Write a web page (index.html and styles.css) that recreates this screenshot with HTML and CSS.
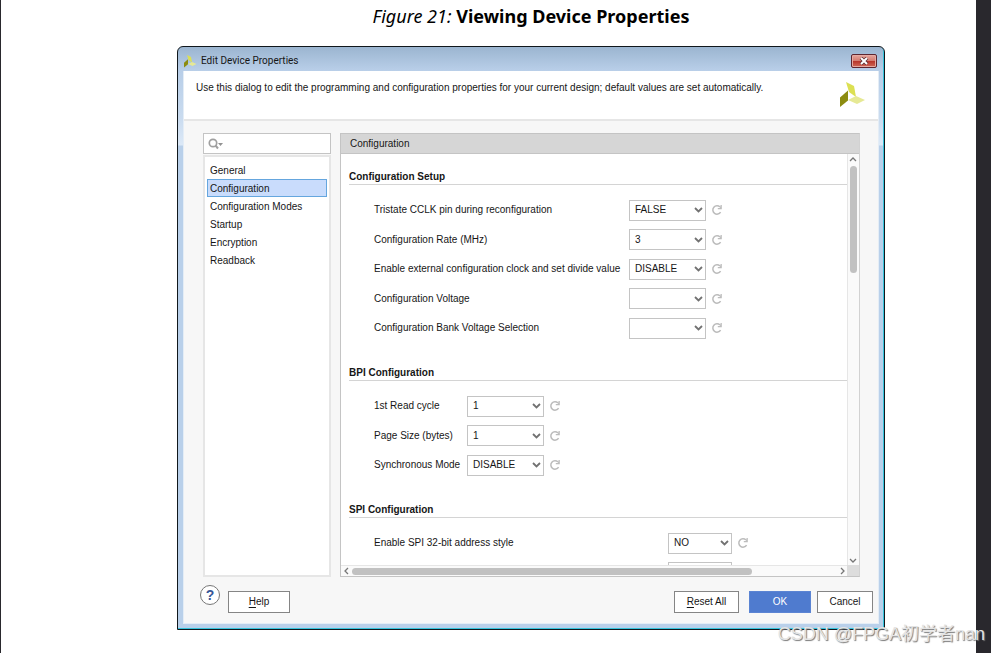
FILE: index.html
```html
<!DOCTYPE html>
<html lang="en">
<head>
<meta charset="utf-8">
<title>Viewing Device Properties</title>
<link rel="stylesheet" href="styles.css">
</head>
<body>
<svg class="defs" aria-hidden="true">
  <symbol id="reset" viewBox="0 0 12 12"><path d="M9.6 8.2A4.2 4.2 0 1 1 9 3" fill="none" stroke="#bcbcbc" stroke-width="1.5"/><path d="M10.8 1V5.2H6.8V4H9L9.6 1z" fill="#bcbcbc"/></symbol>
  <symbol id="logo" viewBox="0 0 26 26"><path d="M6 0l8 4 2 11-7-5z" fill="#dce053"/><path d="M0 15.5l8-7v10L0 25z" fill="#8c8c10"/><path d="M8 18l8-4 9 4-8 4z" fill="#e6e995"/></symbol>
</svg>
<main class="page">
  <h1 class="caption"><em>Figure 21:</em> Viewing Device Properties</h1>
  <section class="dialog">
    <header class="titlebar">
      <svg class="titlebar-logo"><use href="#logo"/></svg>
      <h2 class="title">Edit Device Properties</h2>
      <button class="close" aria-label="Close"><svg viewBox="0 0 10 8"><path d="M2 1l6 6M8 1L2 7" stroke="#5c3034" stroke-width="3.6"/><path d="M2 1l6 6M8 1L2 7" stroke="#fff" stroke-width="2"/></svg></button>
    </header>
    <div class="content">
      <div class="intro"><p>Use this dialog to edit the programming and configuration properties for your current design; default values are set automatically.</p><svg class="intro-logo"><use href="#logo"/></svg></div>
      <div class="workspace">
        <aside class="sidebar">
          <label class="search"><svg viewBox="0 0 16 12"><circle cx="5" cy="5" r="3.7" fill="none" stroke="#a0a0a0" stroke-width="1.7"/><path d="M7.5 7.5L10 10.5" stroke="#a0a0a0" stroke-width="2"/><path d="M10 5h5l-2.5 3z" fill="#929292"/></svg><input type="text" aria-label="Search"></label>
          <nav class="nav">
            <a href="#general">General</a>
            <a href="#configuration" class="selected">Configuration</a>
            <a href="#modes">Configuration Modes</a>
            <a href="#startup">Startup</a>
            <a href="#encryption">Encryption</a>
            <a href="#readback">Readback</a>
          </nav>
        </aside>
        <section class="panel">
          <h3 class="panel-title">Configuration</h3>
          <div class="viewport">
            <div class="settings">
              <fieldset class="group group-setup">
                <legend>Configuration Setup</legend>
                <div class="row"><label for="tristate">Tristate CCLK pin during reconfiguration</label><select id="tristate"><option>FALSE</option></select><button class="reset" aria-label="Reset"><svg><use href="#reset"/></svg></button></div>
                <div class="row"><label for="rate">Configuration Rate (MHz)</label><select id="rate"><option>3</option></select><button class="reset" aria-label="Reset"><svg><use href="#reset"/></svg></button></div>
                <div class="row"><label for="clock">Enable external configuration clock and set divide value</label><select id="clock"><option>DISABLE</option></select><button class="reset" aria-label="Reset"><svg><use href="#reset"/></svg></button></div>
                <div class="row"><label for="voltage">Configuration Voltage</label><select id="voltage"><option></option></select><button class="reset" aria-label="Reset"><svg><use href="#reset"/></svg></button></div>
                <div class="row"><label for="bank">Configuration Bank Voltage Selection</label><select id="bank"><option></option></select><button class="reset" aria-label="Reset"><svg><use href="#reset"/></svg></button></div>
              </fieldset>
              <fieldset class="group group-bpi">
                <legend>BPI Configuration</legend>
                <div class="row"><label for="cycle">1st Read cycle</label><select id="cycle"><option>1</option></select><button class="reset" aria-label="Reset"><svg><use href="#reset"/></svg></button></div>
                <div class="row"><label for="pagesize">Page Size (bytes)</label><select id="pagesize"><option>1</option></select><button class="reset" aria-label="Reset"><svg><use href="#reset"/></svg></button></div>
                <div class="row"><label for="sync">Synchronous Mode</label><select id="sync"><option>DISABLE</option></select><button class="reset" aria-label="Reset"><svg><use href="#reset"/></svg></button></div>
              </fieldset>
              <fieldset class="group group-spi">
                <legend>SPI Configuration</legend>
                <div class="row"><label for="spi">Enable SPI 32-bit address style</label><select id="spi"><option>NO</option></select><button class="reset" aria-label="Reset"><svg><use href="#reset"/></svg></button></div>
                <div class="row"><span></span><select aria-label="SPI option"><option></option></select></div>
              </fieldset>
            </div>
            <div class="vscroll"><svg viewBox="0 0 8 5"><path d="M1 4l3-3 3 3"/></svg><span class="track"><span class="thumb"></span></span><svg viewBox="0 0 8 5"><path d="M1 1l3 3 3-3"/></svg></div>
            <div class="hscroll"><svg viewBox="0 0 5 8"><path d="M4 1L1 4l3 3"/></svg><span class="track"><span class="thumb"></span></span><svg viewBox="0 0 5 8"><path d="M1 1l3 3-3 3"/></svg></div>
            <div class="corner"></div>
          </div>
        </section>
      </div>
      <footer class="actions">
        <button class="question" aria-label="Quick help">?</button>
        <button class="btn btn-help"><u>H</u>elp</button>
        <button class="btn btn-reset"><u>R</u>eset All</button>
        <button class="btn btn-ok">OK</button>
        <button class="btn btn-cancel">Cancel</button>
      </footer>
    </div>
  </section>
  <p class="watermark">CSDN @FPGA初学者nan</p>
</main>
</body>
</html>
```
FILE: styles.css
```css
* { box-sizing: border-box; }
body { margin: 0; background: #fff; color: #161616; font: 10px/18px "Liberation Sans", Arial, sans-serif; overflow: hidden; }
h1, h2, h3, p, fieldset { margin: 0; padding: 0; font-size: inherit; font-weight: normal; border: 0; min-width: 0; }
button, input, select { font: inherit; color: inherit; }
button { padding: 0; }
svg { display: block; }
.defs { position: absolute; width: 0; height: 0; }
.page { position: relative; display: flex; flex-direction: column; min-height: 100vh; margin-right: 10px; padding: 4px 91px 23px 176px; border-left: 1px solid #29282d; border-right: 15px solid #29282d; }
.caption { margin-bottom: 17px; text-align: center; font: bold 18px/25px "Noto Sans", sans-serif; color: #000; }
.caption em { font-weight: normal; }

.dialog { flex: 1; display: flex; flex-direction: column; padding: 0 5px 5px 5px; border: 1px solid #10171c; border-radius: 6px 6px 0 0; background: linear-gradient(#9bb5d0 0, #b8cee8 23px, #c9dbef 70px, #dce9f7 98px, #b9d0ea 99px); box-shadow: inset -1px -1px #35c3dc; }
.titlebar { display: flex; align-items: center; height: 24px; padding: 4px 2px 0 1px; }
.titlebar-logo { width: 13px; height: 13px; }
.title { flex: 1; margin-left: 4px; font: 10px/16px Roboto, sans-serif; }
.close { display: grid; place-items: center; width: 26px; height: 14px; border: 1px solid #5e2630; border-radius: 2px; background: linear-gradient(#e6a59d, #d47c70 48%, #b8352b 52%, #cf6a59); box-shadow: inset 0 0 0 1px #e5aaa2; }
.close svg { width: 10px; height: 8px; }
.content { flex: 1; display: flex; flex-direction: column; border: 1px solid #e4edf6; border-top: 0; background: #f7f7f7; }
.intro { display: flex; justify-content: space-between; height: 50px; padding: 8px 12px 0 12px; border-bottom: 2px solid #e6e6e6; background: #fff; }
.intro-logo { flex: none; width: 26px; height: 26px; margin-top: 3px; }

.workspace { flex: 1; display: flex; gap: 9px; padding: 12px 18px 0 19px; }
.sidebar { display: flex; flex-direction: column; width: 128px; }
.search { display: flex; align-items: center; height: 21px; margin-bottom: 1px; padding-left: 4px; border: 1px solid #c4c4c4; background: #fff; }
.search svg { flex: none; width: 16px; height: 12px; }
.search input { flex: 1; min-width: 0; border: 0; outline: 0; background: none; }
.nav { flex: 1; display: flex; flex-direction: column; padding: 4px 2px; border: 2px solid #e6e6e6; background: #fff; }
.nav a { height: 18px; padding-left: 2px; border: 1px solid transparent; line-height: 17px; color: inherit; text-decoration: none; }
.nav .selected { border-color: #65a6de; background: #c9dcfc; }

.panel { flex: 1; display: flex; flex-direction: column; min-width: 0; border: 1px solid #c4c4c4; border-right-color: #d2d2d2; background: #fff; }
.panel-title { height: 20px; padding-left: 9px; border-bottom: 1px solid #c4c4c4; background: #d6d6d6; line-height: 20px; }
.viewport { flex: 1; display: grid; grid-template-columns: 1fr 12px; grid-template-rows: 1fr 11px; min-height: 0; }
.settings { height: 0; min-height: 100%; overflow: hidden; padding: 14px 0 0 8px; }
.group { margin-bottom: 21px; }
.group legend { width: 100%; height: 17px; margin-bottom: 10px; padding: 0; border-bottom: 1px solid #d4d4d4; font-weight: bold; }
.row { display: grid; align-items: center; height: 30px; padding-left: 25px; }
.row:nth-of-type(even) { height: 29px; }
.group-setup .row { grid-template-columns: 255px 77px 24px; }
.group-bpi .row { grid-template-columns: 93px 77px 24px; }
.group-spi .row { grid-template-columns: 294px 64px 24px; }
.row select { height: 21px; padding: 0 5px; border: 1px solid #c4c4c4; border-radius: 0; appearance: none; background: #fff url("data:image/svg+xml,%3Csvg xmlns='http://www.w3.org/2000/svg' width='9' height='6'%3E%3Cpath d='M1 1l3.5 3.5L8 1' fill='none' stroke='%23727272' stroke-width='1.8'/%3E%3C/svg%3E") no-repeat right 2px center; }
.reset { width: 12px; height: 12px; margin-left: 5px; border: 0; background: none; }
.reset svg { width: 12px; height: 12px; }
.vscroll, .hscroll { display: flex; align-items: center; background: #fafafa; }
.vscroll { flex-direction: column; padding: 3px 1px 2px 0; border-left: 1px solid #e6e6e6; }
.hscroll { padding: 0 2px 0 3px; border-top: 1px solid #e6e6e6; }
.vscroll svg { width: 8px; height: 5px; }
.hscroll svg { width: 5px; height: 8px; }
.vscroll path, .hscroll path { fill: none; stroke: #777; stroke-width: 1.3; }
.track { flex: 1; }
.thumb { display: block; border-radius: 4px; background: #c1c1c1; }
.vscroll .track { padding-top: 4px; }
.vscroll .thumb { width: 7px; height: 107px; }
.hscroll .track { padding-left: 3px; }
.hscroll .thumb { width: 82%; height: 7px; }
.corner { background: #ddd; }

.actions { display: flex; align-items: center; height: 46px; padding: 4px 5px 0 16px; }
.question { width: 20px; height: 20px; margin: 0 8px 14px 0; border: 1px solid #777; border-radius: 50%; background: #fff; color: #385698; font-weight: bold; font-size: 14px; line-height: 18px; }
.btn { height: 22px; border: 1px solid #858585; background: #fff; }
.btn u { text-underline-offset: 2px; }
.btn-help { width: 62px; margin-right: auto; }
.btn-reset { width: 65px; margin-right: 10px; }
.btn-ok { width: 62px; margin-right: 6px; border-color: #5b84d3; background: #4f7bcf; color: #fff; }
.btn-cancel { width: 56px; }
.watermark { position: absolute; right: -9px; bottom: 5px; color: #e4e4e4; font: 18px/27px "Liberation Sans", "Noto Sans CJK SC", sans-serif; text-shadow: 1px 1px 1px #777; }
```
